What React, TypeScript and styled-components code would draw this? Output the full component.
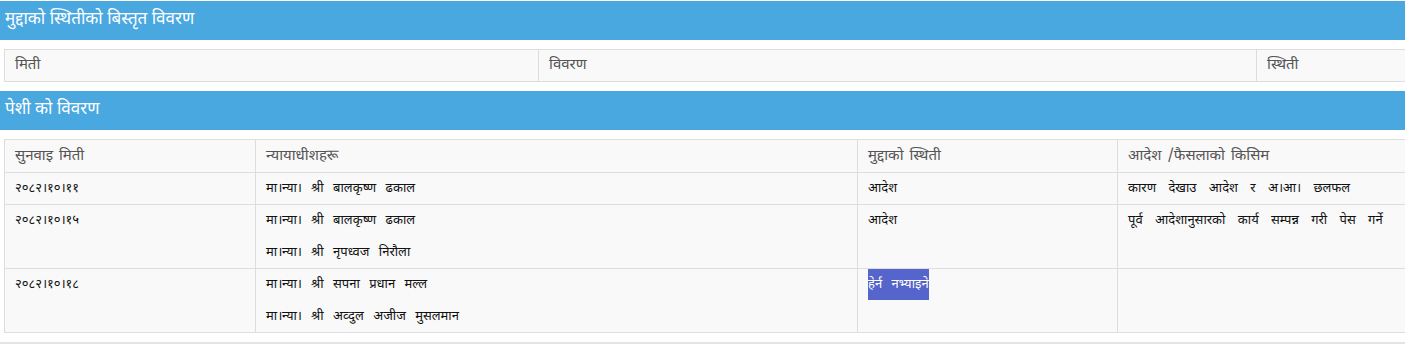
import React from "react";
import styled, { createGlobalStyle } from "styled-components";

const GlobalStyle = createGlobalStyle`
  body {
    margin: 0;
    background: #fff;
    font-family: "Noto Sans Devanagari", "Lohit Devanagari", "Noto Sans", sans-serif;
  }
`;

const summaryCols = [
  { label: "मिती", width: 534 },
  { label: "विवरण", width: 718 },
  { label: "स्थिती", width: 149 },
];

const hearingCols = [
  { label: "सुनवाइ मिती", width: 251 },
  { label: "न्यायाधीशहरू", width: 602 },
  { label: "मुद्दाको स्थिती", width: 260 },
  { label: "आदेश /फैसलाको किसिम", width: 288 },
];

const hearings = [
  {
    date: "२०८२।१०।११",
    judges: ["मा।न्या। श्री बालकृष्ण ढकाल"],
    status: "आदेश",
    order: "कारण देखाउ आदेश र अ।आ। छलफल",
  },
  {
    date: "२०८२।१०।१५",
    judges: ["मा।न्या। श्री बालकृष्ण ढकाल", "मा।न्या। श्री नृपध्वज निरौला"],
    status: "आदेश",
    order: "पूर्व आदेशानुसारको कार्य सम्पन्न गरी पेस गर्ने",
  },
  {
    date: "२०८२।१०।१८",
    judges: ["मा।न्या। श्री सपना प्रधान मल्ल", "मा।न्या। श्री अव्दुल अजीज मुसलमान"],
    status: "हेर्न नभ्याइने",
    hidden: true,
    order: "",
  },
];

const App = () => {
  return (
    <Page>
      <GlobalStyle />
      <SectionTitle>मुद्दाको स्थितीको बिस्तृत विवरण</SectionTitle>
      <Table>
        <colgroup>
          {summaryCols.map((c) => (
            <col key={c.label} style={{ width: c.width }} />
          ))}
        </colgroup>
        <thead>
          <tr>
            {summaryCols.map((c) => (
              <Th key={c.label} $height={31}>
                {c.label}
              </Th>
            ))}
          </tr>
        </thead>
      </Table>

      <SectionTitle>पेशी को विवरण</SectionTitle>
      <Table>
        <colgroup>
          {hearingCols.map((c) => (
            <col key={c.label} style={{ width: c.width }} />
          ))}
        </colgroup>
        <thead>
          <tr>
            {hearingCols.map((c) => (
              <Th key={c.label} $height={32}>
                {c.label}
              </Th>
            ))}
          </tr>
        </thead>
        <tbody>
          {hearings.map((h) => (
            <tr key={h.date}>
              <Td>
                <Line>{h.date}</Line>
              </Td>
              <Td>
                {h.judges.map((j) => (
                  <Line key={j}>{j}</Line>
                ))}
              </Td>
              <Td>
                <Line>{h.hidden ? <Badge>{h.status}</Badge> : h.status}</Line>
              </Td>
              <Td $spacing={9}>
                <Line>{h.order}</Line>
              </Td>
            </tr>
          ))}
        </tbody>
      </Table>
      <Rule />
    </Page>
  );
};

const Page = styled.div`
  padding-top: 1px;
  width: 1405px;
`;

const SectionTitle = styled.div`
  background-color: #4aa8e0;
  color: #fff;
  height: 39px;
  line-height: 38px;
  padding-left: 5px;
  font-size: 17px;
  margin-bottom: 9px;
`;

const Table = styled.table`
  margin: 0 0 9px 4px;
  width: 1401px;
  table-layout: fixed;
  border-collapse: collapse;
  background: #f9f9f9;
  border: 1px solid #ddd;
`;

const Th = styled.th<{ $height: number }>`
  text-align: left;
  font-weight: normal;
  color: #555;
  font-size: 15px;
  height: ${(p) => p.$height}px;
  padding: 0 10px;
  border: 1px solid #ddd;
  vertical-align: middle;
  word-spacing: 2px;
`;

const Td = styled.td<{ $spacing?: number }>`
  color: #111;
  font-size: 13px;
  padding: 0 10px;
  border: 1px solid #ddd;
  vertical-align: top;
  word-spacing: ${(p) => p.$spacing ?? 6}px;
`;

const Line = styled.div`
  height: 31px;
  line-height: 31px;
  white-space: nowrap;

  & + & {
    margin-top: 1px;
  }
`;

const Badge = styled.span`
  display: inline-block;
  background: #5565cc;
  color: #fff;
  height: 31px;
  line-height: 31px;
`;

const Rule = styled.hr`
  margin: 0;
  border: 0;
  border-top: 2px solid #e4e4e4;
`;

export default App;
